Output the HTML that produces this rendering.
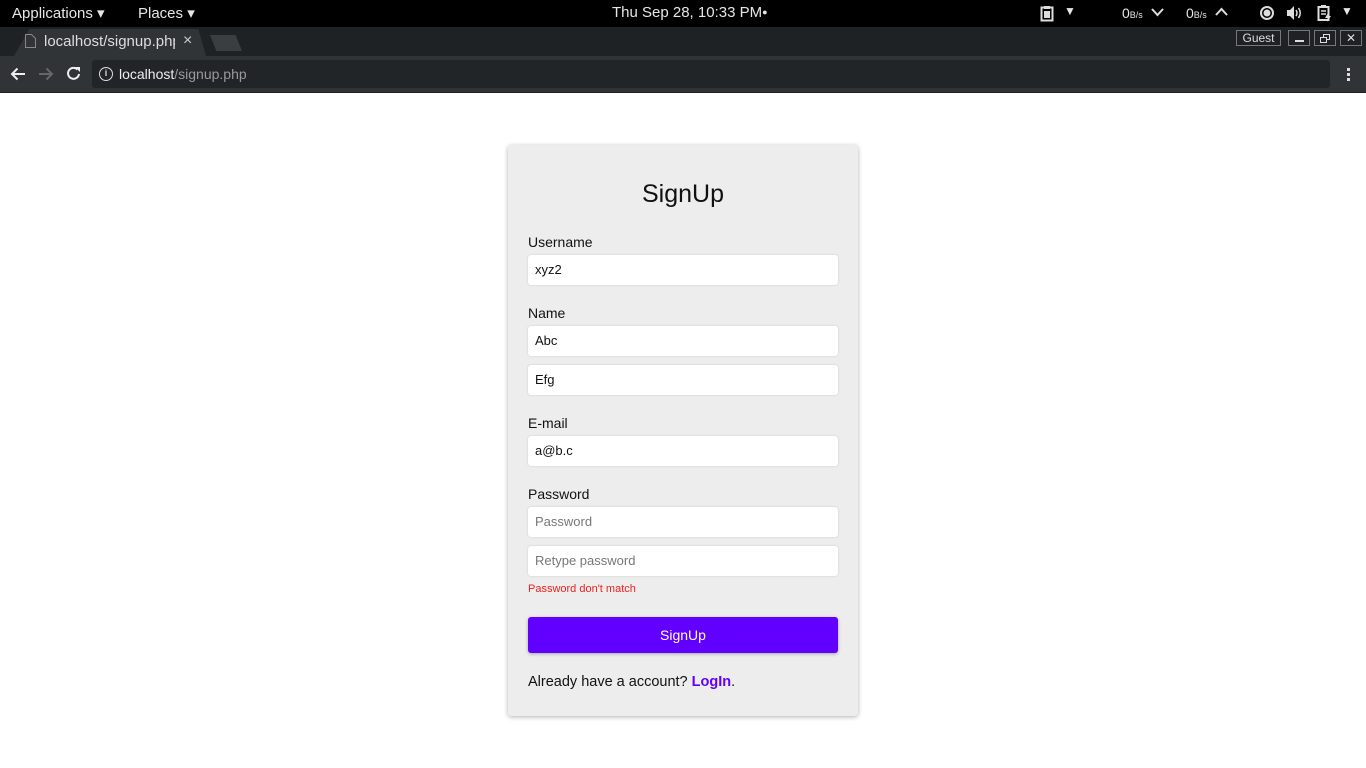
<!DOCTYPE html>
<html><head><meta charset="utf-8"><style>
*{margin:0;padding:0;box-sizing:border-box}
body{width:1366px;height:768px;overflow:hidden;background:#fff;font-family:"Liberation Sans",sans-serif;position:relative}
.abs{position:absolute}
.top{left:0;top:0;width:1366px;height:27px;background:#000;color:#e6e6e6;font-family:"Liberation Sans",sans-serif;font-size:15px}
.tabs{left:0;top:27px;width:1366px;height:29px;background:#1f2224}
.tool{left:0;top:56px;width:1366px;height:37px;background:#303436;border-bottom:1px solid #222}
.card{left:508px;top:145px;width:350px;height:571px;background:#ededed;border-radius:3px;box-shadow:0 1px 5px rgba(0,0,0,.3)}
.lbl{left:528px;font-size:14px;color:#111}
.in{left:528px;width:310px;height:30px;background:#fff;border-radius:3px;box-shadow:0 0 2px rgba(0,0,0,.15);font-size:13px;color:#111;padding:7px 0 0 7px}
.ph{color:#777}
</style></head><body>
<div class="abs top">
 <span class="abs" style="left:12px;top:4px">Applications ▾</span>
 <span class="abs" style="left:138px;top:4px">Places ▾</span>
 <span class="abs" style="left:612px;top:4px">Thu Sep 28, 10:33 PM<span style="font-size:9px;vertical-align:2px">●</span></span>
 <svg class="abs" style="left:1040px;top:5px" width="14" height="17"><rect x="1.5" y="2.5" width="11" height="13" fill="none" stroke="#ddd" stroke-width="2"/><rect x="4" y="1" width="6" height="3" fill="#ddd"/><rect x="4" y="6" width="6" height="7" fill="#ddd"/></svg>
 <span class="abs" style="left:1064px;top:4px;font-size:12px">▼</span>
 <span class="abs" style="left:1122px;top:5px;font-size:14px">0<small style="font-size:9px">B/s</small></span>
 <svg class="abs" style="left:1151px;top:8px" width="13" height="9"><path d="M1 1l5.5 6 5.5-6" fill="none" stroke="#ddd" stroke-width="2"/></svg>
 <span class="abs" style="left:1186px;top:5px;font-size:14px">0<small style="font-size:9px">B/s</small></span>
 <svg class="abs" style="left:1215px;top:7px" width="13" height="9"><path d="M1 8l5.5-6 5.5 6" fill="none" stroke="#ddd" stroke-width="2"/></svg>
 <svg class="abs" style="left:1259px;top:5px" width="16" height="16"><circle cx="8" cy="8" r="6" fill="none" stroke="#ddd" stroke-width="2"/><circle cx="8" cy="8" r="3.5" fill="#ddd"/></svg>
 <svg class="abs" style="left:1286px;top:5px" width="17" height="16"><path d="M1 5h3l4-4v14l-4-4H1z" fill="#ddd"/><path d="M10 5q2 3 0 6M12.5 3q3.5 5 0 10" fill="none" stroke="#ddd" stroke-width="1.5"/></svg>
 <svg class="abs" style="left:1317px;top:4px" width="14" height="18"><rect x="1.5" y="3" width="10" height="13" fill="none" stroke="#ddd" stroke-width="2"/><rect x="4" y="1" width="5" height="2" fill="#ddd"/><path d="M4 7h5M4 10h5" stroke="#ddd" stroke-width="1.5"/><path d="M11 9l-3 5h3l-1 4 4-6h-3z" fill="#ddd"/></svg>
 <span class="abs" style="left:1341px;top:4px;font-size:12px">▼</span>
</div>
<div class="abs tabs">
 <div class="abs" style="left:14px;top:2px;width:192px;height:27px;background:#303436;clip-path:polygon(8% 0,96% 0,100% 100%,0 100%)"></div>
 <svg class="abs" style="left:25px;top:7px" width="11" height="14"><path d="M0.5 0.5h6l4 4v9h-10z" fill="none" stroke="#888"/></svg>
 <span class="abs" style="left:44px;top:6px;color:#ddd;font-size:15px;width:131px;overflow:hidden;white-space:nowrap">localhost/signup.php</span>
 <span class="abs" style="left:183px;top:5px;color:#ccc;font-size:16px">×</span>
 <div class="abs" style="left:210px;top:8px;width:32px;height:16px;background:#3a3e41;clip-path:polygon(0 0,80% 0,100% 100%,20% 100%)"></div>
 <span class="abs" style="left:1236px;top:3px;width:45px;height:16px;border:1px solid #777;color:#ddd;font-size:12px;text-align:center;line-height:14px">Guest</span>
 <span class="abs" style="left:1288px;top:3px;width:22px;height:16px;border:1px solid #777"><i class="abs" style="left:6px;top:9px;width:9px;height:2px;background:#ddd"></i></span>
 <span class="abs" style="left:1314px;top:3px;width:22px;height:16px;border:1px solid #777"><i class="abs" style="left:8px;top:3px;width:7px;height:6px;border:1px solid #ddd"></i><i class="abs" style="left:5px;top:6px;width:7px;height:6px;border:1px solid #ddd;background:#1f2224"></i></span>
 <span class="abs" style="left:1340px;top:3px;width:22px;height:16px;border:1px solid #777;color:#ddd;font-size:12px;text-align:center;line-height:14px">✕</span>
</div>
<div class="abs tool">
 <svg class="abs" style="left:10px;top:11px" width="16" height="14"><path d="M15 7H2M7.5 1.5L2 7l5.5 5.5" fill="none" stroke="#eee" stroke-width="2"/></svg>
 <svg class="abs" style="left:38px;top:11px" width="16" height="14"><path d="M1 7h13M8.5 1.5L14 7l-5.5 5.5" fill="none" stroke="#666" stroke-width="2"/></svg>
 <svg class="abs" style="left:66px;top:10px" width="16" height="16"><path d="M13 8A5.5 5.5 0 1 1 11.5 3.5" fill="none" stroke="#eee" stroke-width="2"/><path d="M9 1h5v5z" fill="#eee"/></svg>
 <div class="abs" style="left:92px;top:4px;width:1238px;height:28px;background:#222527;border-radius:3px"></div>
 <span class="abs" style="left:99px;top:11px;width:14px;height:14px;border:1.5px solid #ddd;border-radius:50%;color:#ddd;font-size:9px;text-align:center;line-height:11px;font-weight:bold">i</span>
 <span class="abs" style="left:119px;top:10px;font-size:14px;color:#eee">localhost<span style="color:#999">/signup.php</span></span>
 <span class="abs" style="left:1347px;top:12px;width:3px;height:3px;background:#ddd;box-shadow:0 5px 0 #ddd,0 10px 0 #ddd"></span>
</div>
<div class="abs card"></div>
<div class="abs" style="left:508px;top:180px;width:350px;text-align:center;font-size:25px;color:#111">SignUp</div>
<div class="abs lbl" style="top:234px">Username</div>
<div class="abs in" style="top:255px">xyz2</div>
<div class="abs lbl" style="top:305px">Name</div>
<div class="abs in" style="top:326px">Abc</div>
<div class="abs in" style="top:365px">Efg</div>
<div class="abs lbl" style="top:415px">E-mail</div>
<div class="abs in" style="top:436px">a@b.c</div>
<div class="abs lbl" style="top:486px">Password</div>
<div class="abs in ph" style="top:507px">Password</div>
<div class="abs in ph" style="top:546px">Retype password</div>
<div class="abs" style="left:528px;top:583px;font-size:11px;color:#f02020">Password don't match</div>
<div class="abs" style="left:528px;top:617px;width:310px;height:36px;background:#6200ff;border-radius:3px;box-shadow:0 1px 3px rgba(0,0,0,.3);color:#fff;font-size:14px;text-align:center;line-height:36px">SignUp</div>
<div class="abs" style="left:528px;top:674px;font-size:14.5px;color:#111">Already have a account? <b style="color:#6200ff">LogIn</b>.</div>
</body></html>
